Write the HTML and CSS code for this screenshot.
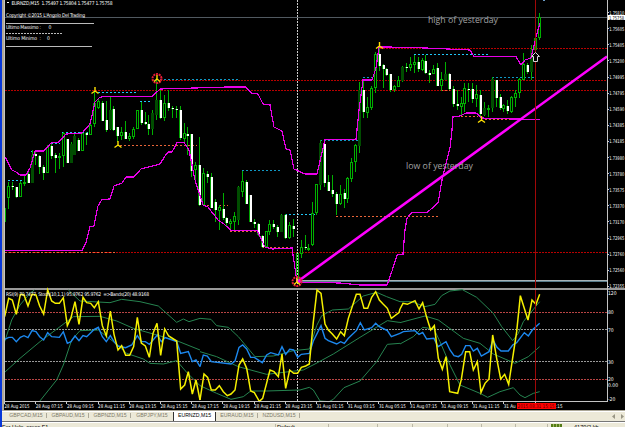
FILE: index.html
```html
<!DOCTYPE html>
<html lang="en">
<head>
<meta charset="utf-8">
<title>EURNZD,M15</title>
<link rel="stylesheet" href="styles.css">
</head>
<body>
<div class="window">
<main class="chart">
<svg class="plot" width="621" height="411" viewBox="4 0 621 411">
  <path class="level" d="M5 90.5H607M5 252.5H607M160 80.5H607M380 48.5H607"/>
  <path class="price" d="M4 17.5H607"/>
  <path class="high-dots" d="M8 180.5H25M31 151.5H40M51 143.5H60M62 132.5H90M98 92.5H137M140 101.5H152M414 54.5H488M285 214.5H317"/>
  <path class="high-dots dim" d="M160 79.5H240M242 170.5H282M320 140.5H358M363 77.5H373M380 47.5H425M492 77.5H536"/>
  <path class="low-dots" d="M120 145.5H197M203 205.5H228M230 231.5H257M262 247.5H290M336 216.5H438M441 90.5H450M461 116.5H478M485 119.5H530M5 252.5H115"/>
  <g id="candles"></g>
  <path class="day-end" d="M297.5 0V401"/>
  <path class="steel" d="M297 280.5H607"/>
  <path class="steel shade" d="M297 281.5H607"/>
  <polyline class="channel" points="4,155 12,170 16,172 20,175 26,175 30,168 35,151 44,151 51,143 59,142 66,134 82,133 90,124 95,102 99,98 103,96.500 152,96.500 160,89 195,88 228,87 246,87 251,93 258,94 263,104 270,105 274,127 282,131 286,149 290,150 294,169 305,174 317,174 325,139.500 356,139.500 359,110 363,80 372,80 376,68 379,47 388,47 426,48 470,50 474,56.500 516,56.500 521,65 525,60 531,58 533,50 536,37 540,23"/>
  <polyline class="channel" points="4,250.500 82,250.500 86,243 90,227 94,226 98,206 102,199.500 110,199 114,186 122,183 126,177 134,177 141,169 160,164 165,156 168,152 172,152 177,142.500 184,142.500 189,150 195,180 203,205 208,207 218,220 224,224 231,230.500 257,230.500 265,247 272,249 292,248 297,282 340,283 360,285 387,285 392,271 397,255 403,254 405,230 407,218 412,212.500 427,212.500 438,203 442,180 450,148 452,130 453,117 460,116 466,113 476,113 482,118 490,118.500 540,119.500"/>
  <path class="trend" d="M297 282L607 56.500"/>
  <path class="cursor" d="M535.500 0V401"/>
  <g class="rings"><circle cx="157" cy="78.500" r="4.500"/><circle cx="297" cy="281.500" r="4.500"/></g>
  <g class="stars">
    <path d="M95 87v4l-3.500 2.500M95 91l3.500 2.500"/><path d="M118 141v4l-3.500 2.500M118 145l3.500 2.500"/><path d="M157 75v4l-3 2.500M157 79l3 2.500"/>
    <path d="M379.500 42v4l-3.500 2.500M379.500 46l3.500 2.500"/><path d="M481.500 116v4l-3.500 2.500M481.500 120l3.500 2.500"/><path d="M297 278v4l-3 2.500M297 282l3 2.500"/>
  </g>
  <path class="arrow" d="M535.500 52.500l4 4h-2v5h-4v-5h-2z"/>
  <text class="note" x="428" y="23" textLength="70" lengthAdjust="spacingAndGlyphs">high of yesterday</text>
  <text class="note" x="406" y="169" textLength="67" lengthAdjust="spacingAndGlyphs">low of yesterday</text>

  <path class="split" d="M4 289H625"/>
  <path class="osc-level" d="M5 312.500H607M5 379.500H607"/>
  <path class="osc-level neutral" d="M5 329.500H607M5 361.500H607"/>
  <g class="osc">
    <g transform="translate(0 285) scale(.33333)">
      <polyline class="band" points="14,170 35,105 60,60 90,25 103,15"/>
      <polyline class="band" points="205,15 240,48 330,53 365,43 420,50 475,63 530,112 550,102 567,110 600,100"/>
      <polyline class="band" points="14,262 60,220 120,170 180,125 220,95 300,94 350,108 400,130 530,167 600,195"/>
      <polyline class="band" points="118,350 170,285 190,240 215,165 240,137 295,135 340,170 380,205 430,222 450,235 490,237 530,227 560,262 600,302"/>
      <polyline class="rsi" points="14,163 26,157 37,157 49,170 61,157 72,152 84,158 96,137 108,140 119,155 131,165 143,143 155,155 178,157 190,140 202,175 213,170 225,153 237,167 249,152 260,155 283,133 295,127 307,155 319,170 331,152 342,170 354,183 377,188 395,180 412,152 424,170 436,170 448,178 472,150 484,170 495,158 530,170 542,205 565,200 577,230 588,225 600,245"/>
      <polyline class="stoch" points="14,95 26,40 37,45 49,88 61,28 72,30 84,63 96,28 108,30 119,63 131,87 143,15 155,48 166,55 178,55 190,38 202,122 213,98 225,50 237,118 249,37 260,53 272,55 283,68 295,50 307,122 319,153 331,78 342,148 354,195 365,182 377,211 389,211 401,185 412,97 424,174 436,183 448,217 459,145 471,115 482,211 494,132 506,153 530,168 542,312 554,300 565,260 577,327 588,285 600,345"/>
    </g>
    <g transform="translate(200 285) scale(.33333)">
      <polyline class="band" points="0,100 33,103 50,122 85,127 115,155 165,215 220,213 280,197 328,192 350,122 365,92 397,75 445,72 490,33 530,22 560,35 600,50"/>
      <polyline class="band" points="0,200 50,215 115,245 200,268 310,255 345,237 400,207 480,157 562,107 597,112 600,112"/>
      <polyline class="band" points="0,302 50,325 93,343 130,335 152,318 200,318 300,315 328,307 340,315 360,348 387,350 400,343 432,308 480,288 530,230 562,178 600,175"/>
      <polyline class="rsi" points="0,245 10,210 22,213 34,230 93,237 105,228 117,187 128,180 140,192 152,217 163,217 187,233 200,210 212,203 235,210 246,185 257,208 269,193 281,195 293,217 304,208 328,205 340,168 363,122 375,160 385,167 410,177 422,170 433,175 445,160 469,137 481,113 493,135 515,128 527,115 538,125 562,137 574,155 600,145"/>
      <polyline class="stoch" points="0,345 12,267 23,277 34,315 46,315 58,302 70,320 82,332 93,327 105,315 117,240 128,222 140,250 152,318 163,323 178,349 188,340 210,255 222,260 235,275 246,207 257,310 269,255 281,265 293,265 304,247 317,243 328,237 340,110 351,15 363,25 375,117 385,135 397,147 410,162 422,140 433,152 445,100 469,28 480,28 492,70 503,70 515,37 527,20 538,45 550,58 562,70 574,100 597,83 600,72"/>
    </g>
    <g transform="translate(400 285) scale(.33333)">
      <polyline class="band" points="0,50 35,50 75,65 105,58 125,32 150,18 187,14 230,37 280,85 305,125 338,167 355,145 370,110 419,50"/>
      <polyline class="band" points="0,113 30,105 75,93 115,105 190,160 240,175 280,207 345,235 385,215 419,185"/>
      <polyline class="band" points="0,177 40,155 68,127 102,132 120,170 150,240 180,300 240,325 263,337 300,320 340,308 360,330 375,338 400,325 419,320"/>
      <polyline class="rsi" points="0,145 10,140 45,137 57,148 68,142 80,162 102,160 114,185 138,170 150,195 162,212 175,215 185,208 197,182 210,182 220,198 232,190 244,213 267,200 279,165 291,187 303,198 325,198 338,180 350,173 373,143 385,153 397,135 419,115"/>
      <polyline class="stoch" points="0,72 9,55 22,58 45,47 57,72 68,53 80,97 92,135 103,122 115,220 127,253 138,215 149,320 173,325 184,283 197,200 209,200 220,255 232,230 243,322 255,295 267,282 278,150 290,220 302,282 314,268 326,298 350,140 361,32 384,105 396,45 408,58 419,28"/>
    </g>
  </g>
  <path class="cursor" d="M535.500 291V401"/>
  <path class="frame" d="M4.500 0V401.500H607.500V0"/>

  <g class="small">
    <path class="caret" d="M6 1.500h4l-2 2.500z"/>
    <text x="11.500" y="4.500" textLength="101">EURNZD,M15&#160; 1.75497 1.75804 1.75477 1.75758</text>
    <text x="6" y="17" textLength="79">Copyright ©2015 L'Angolo Del Trading</text>
    <path class="rule" d="M6 23.500H94M6 46.500H92"/><path class="rule dashed" d="M6 33.500H63"/>
    <text x="6" y="28.500" textLength="35">Ultimo Massimo :</text><text x="48.500" y="28.500">0</text>
    <text x="6" y="40" textLength="35">Ultimo Minimo &#160;:</text><text x="47" y="40">0</text>
    <text x="6" y="296" textLength="143">RSI(9) 70.7477&#160; Stoch(10,1,1) 95.9762 95.9762&#160; =&gt;Bands(20) 48.9168</text>
  </g>
  <g class="small" id="axes"></g>
  <rect class="tag" x="608" y="15" width="17" height="5"/>
  <text class="small tag-text" x="609" y="19.500" textLength="15" lengthAdjust="spacingAndGlyphs">1.75758</text>
  <rect class="time-tag" x="516.500" y="403" width="39" height="6"/>
  <text class="small time-text" x="517.500" y="408.200" textLength="37" lengthAdjust="spacingAndGlyphs">2015.08.31 15:15</text>
  <rect class="speck" x="543" y="0" width="2" height="1"/>
</svg>
</main>
<nav class="tabs">
  <span class="tab">GBPCAD,M15</span><span class="tab">GBPAUD,M15</span><span class="tab">GBPNZD,M15</span><span class="tab last">GBPJPY,M15</span><span class="tab active">EURNZD,M15</span><span class="tab">EURAUD,M15</span><span class="tab">NZDUSD,M15</span>
  <svg class="scroll" width="12" height="5" viewBox="0 0 12 5"><path d="M3 0v5L0 2.500zM9 0v5l3-2.500z"/></svg>
</nav>
<footer class="status">
  <span class="cell help">For Help, press F1</span><span class="cell profile">Default</span><span class="cell c49"></span><span class="cell c35"></span><span class="cell c35"></span><span class="cell c34"></span><span class="cell c34"></span><span class="cell c32"></span>
  <span class="signal"></span><span class="traffic">4170/2 kb</span>
</footer>
</div>
<script src="chart.js"></script>
</body>
</html>
```
FILE: styles.css
```css
* { box-sizing: border-box; }
body { margin: 0; background: #000; font-family: "Liberation Sans", Arial, sans-serif; overflow: hidden; }
.window { width: 625px; height: 427px; display: flex; flex-direction: column; border-left: 2px solid #0838d8; background: #ece9d8; overflow: hidden; }
.chart { height: 411px; flex: none; padding-left: 2px; background: #b0a898; border-bottom: 1px solid #aca899; overflow: hidden; }
.plot { display: block; background: #000; shape-rendering: crispEdges; }
.plot path, .plot polyline { fill: none; }
.level { stroke: #b80000; stroke-dasharray: 2 1; }
.price { stroke: #515960; }
.high-dots { stroke: #20c8f8; stroke-dasharray: 2 2; }
.high-dots.dim { stroke: #1098c4; stroke-dasharray: 2 2; }
.low-dots { stroke: #e86438; stroke-dasharray: 2 2; }
.day-end { stroke: #ccc; stroke-dasharray: 2 1; }
.steel { stroke: #a8b4b8; }
.steel.shade { stroke: #587c8c; }
.channel { stroke: #e800e8; stroke-width: 1.2; }
.trend { stroke: #ff00ff; stroke-width: 2.6; shape-rendering: auto; }
.cursor { stroke: #a00808; }
.rings { fill: none; stroke: #e81c38; stroke-width: 2; stroke-dasharray: 2 .8; shape-rendering: auto; }
.stars { stroke: #ffe000; stroke-width: 1.4; shape-rendering: auto; }
.plot .arrow { fill: #000; stroke: #d8d8d8; shape-rendering: auto; }
.note { font: 9px "Open Sans", "Noto Sans", sans-serif; fill: #a2a2a2; }
.split { stroke: #999; stroke-width: 2; }
.osc-level { stroke: #b84444; stroke-dasharray: 2 1; }
.osc-level.neutral { stroke: #999; }
.osc polyline { vector-effect: non-scaling-stroke; shape-rendering: auto; }
.band { stroke: #268450; stroke-width: 1; }
.rsi { stroke: #1c88ee; stroke-width: 1.4; }
.stoch { stroke: #f5f000; stroke-width: 1.5; }
.frame { stroke: #c4c4c4; }
.small { font-family: "DejaVu Sans Condensed", "Liberation Sans", sans-serif; font-size: 5px; fill: #fff; }
.plot .caret { fill: #fff; }
.rule { stroke: #bbb; }
.rule.dashed { stroke-dasharray: 2 1; }
.tick { stroke: #ccc; }
.wick { stroke: #00b000; }
.bull { fill: #000; stroke: #00b000; }
.edge { fill: #00a000; }
.bear { fill: #fff; }
.solid { fill: #004c00; }
.tag { fill: #fff; }
.tag-text { fill: #000; }
.time-tag { fill: #ff0000; }
.time-text { fill: #500; }
.speck { fill: #6c9cc8; }
.tabs { height: 11px; flex: none; display: flex; align-items: center; padding-left: 3px; border-top: 1px solid #fff; border-bottom: 1px solid #777; font-size: 5.2px; color: #7c796a; }
.tab { width: 42px; height: 9px; line-height: 7px; text-align: center; position: relative; white-space: nowrap; }
.tab::after { content: ""; position: absolute; right: 0; top: 1px; width: 1px; height: 5px; background: #aca899; }
.tab.last::after, .tab.active::after { display: none; }
.tab.active { width: 43px; background: #fff; color: #000; border: solid #333; border-width: 0 1px; }
.scroll { margin-left: auto; margin-right: 1px; fill: #999685; }
.status { height: 5px; flex: none; display: flex; padding-top: 1px; font-size: 5.6px; line-height: 6px; color: #000; border-top: 1px solid #fff; }
.cell { border-right: 1px solid #bbb8a8; height: 8px; white-space: nowrap; flex: none; }
.help { width: 274px; }
.profile { width: 53px; padding-left: 1px; }
.c49 { width: 49px; }
.c35 { width: 35px; }
.c34 { width: 34px; }
.c32 { width: 32px; }
.signal { width: 11px; height: 6px; margin: 0 12px 0 3px; background: repeating-linear-gradient(90deg, #547c18 0 2px, #a0b860 2px 3px); flex: none; }
.traffic { white-space: nowrap; }
```
FILE: chart.js
```js
// Bars as [high, low, body top, body bottom, kind]: w = bear, h = bull, d = solid
const bars = `196 228 208 222 h|182 209 186 198 h|182 190 186 187 w|187 198 187 197 w|181 197 183 197 h|174 186 182 184 h|171 183 174 183 w|150 183 155 183 d|150 165 154 156 w|155 174 156 167 w|165 180 167 173 w|145 173 147 173 h|143 159 146 156 w|153 173 155 158 w|153 169 156 157 h|132 167 133 156 h|139 163 139 163 w|142 163 144 163 d|134 155 136 155 d|138 151 140 151 w|132 151 133 151 h|132 145 133 135 w|123 135 125 135 h|91 127 103 124 h|99 109 101 108 h|101 121 103 121 w|101 132 120 130 w|97 130 110 129 d|106 131 109 130 w|127 142 127 136 w|127 140 132 136 h|121 139 132 139 w|133 141 136 139 h|127 139 129 137 h|110 129 110 129 h|102 125 110 123 w|112 125 122 124 w|115 135 124 129 w|110 135 113 129 d|78 120 100 115 d|89 119 100 118 w|95 121 103 118 h|90 111 103 108 w|106 118 108 109 w|106 118 109 110 w|106 140 110 138 w|123 143 133 139 h|127 155 134 136 w|134 177 134 171 w|162 180 165 170 h|137 206 165 205 w|168 206 173 205 h|171 183 174 177 w|173 208 177 208 w|199 222 202 210 w|205 230 207 211 h|193 220 209 218 w|217 227 218 223 w|219 231 221 224 h|212 230 216 222 h|186 225 187 220 d|171 197 181 192 h|180 204 182 204 w|195 222 195 222 w|219 228 222 224 w|223 236 224 235 w|235 248 236 247 w|231 247 231 247 h|220 235 224 232 h|220 229 224 227 w|225 237 227 232 w|214 232 215 232 d|214 239 215 238 w|222 239 225 238 h|219 237 226 229 w|252 281 253 281 h|240 258 247 254 h|235 250 247 248 w|244 251 248 250 h|202 246 213 245 h|184 215 184 213 h|140 190 143 185 d|142 187 144 183 w|175 191 182 191 w|175 197 190 194 w|192 215 194 204 w|185 205 194 204 h|189 208 193 199 w|177 203 178 199 h|158 182 162 179 h|144 172 145 162 h|82 153 90 146 d|79 118 90 112 w|97 118 107 113 h|86 110 88 108 h|52 93 54 88 h|47 71 54 66 w|64 88 65 69 w|68 76 69 75 w|74 92 74 90 w|85 92 86 90 h|76 87 80 87 h|66 82 67 81 d|63 72 67 68 w|57 71 64 68 h|55 73 62 65 h|57 72 62 69 w|58 71 60 70 h|55 74 61 73 w|70 83 73 75 w|65 74 69 74 h|63 86 68 86 w|72 91 79 86 h|62 80 74 80 d|73 90 74 89 w|86 107 89 104 w|90 110 104 106 w|97 116 103 107 h|83 112 88 104 h|83 102 89 90 w|83 103 89 99 w|85 107 94 99 h|90 116 95 114 w|102 116 108 115 d|105 117 108 109 h|77 112 79 108 d|80 107 80 98 w|94 110 97 108 w|104 112 105 109 h|100 114 106 111 w|96 113 97 112 h|90 107 93 98 h|78 98 79 93 h|53 80 64 80 h|63 74 65 72 w|45 80 50 72 d|37 53 38 50 h|13 40 17 38 h`;
const NS = "http://www.w3.org/2000/svg";
const add = (parent, tag, attrs, text) => {
  const el = document.createElementNS(NS, tag);
  for (const key in attrs) el.setAttribute(key, attrs[key]);
  if (text) el.textContent = text;
  parent.append(el);
};
const candles = document.getElementById("candles");
bars.split("|").forEach((bar, i) => {
  const [high, low, top, bottom, kind] = bar.split(" ");
  const x = Math.floor(4.7 + 3.9 * i);
  add(candles, "path", { class: "wick", d: `M${x + .5} ${high}V${low}` });
  if (kind === "h") {
    add(candles, "rect", { class: "bull", x: x - .5, y: +top + .5, width: 2, height: Math.max(1, bottom - top - 1) });
  } else if (kind === "w") {
    add(candles, "rect", { class: "edge", x: x - 1, y: top, width: 3, height: bottom - top });
    add(candles, "rect", { class: "bear", x, y: top, width: 2, height: bottom - top });
  } else {
    add(candles, "rect", { class: "solid", x: x - 1, y: top, width: 3, height: bottom - top });
  }
});
const axes = document.getElementById("axes");
const prices = ["1.75810","1.75605","1.75405","1.75200","1.74995","1.74795","1.74590","1.74385","1.74185","1.73980","1.73780","1.73575","1.73370","1.73170","1.72965","1.72760","1.72560","1.72355"];
prices.forEach((price, i) => {
  const y = 12.6 + i * 16.1;
  add(axes, "path", { class: "tick", d: `M607 ${Math.floor(y) + .5}h2` });
  add(axes, "text", { x: 609.3, y: y + 2, textLength: 15, lengthAdjust: "spacingAndGlyphs" }, price);
});
[["120",295],["80",314],["70",332],["30",363.5],["20",381],["0.00",387.300],["-20",400.500]].forEach(([label, y]) => add(axes, "text", { x: 608, y }, label));
["28 Aug 2015","28 Aug 07:15","28 Aug 09:15","28 Aug 11:15","28 Aug 13:15","28 Aug 15:15","28 Aug 17:15","28 Aug 19:15","28 Aug 21:15","28 Aug 23:15","31 Aug 01:15","31 Aug 03:15","31 Aug 05:15","31 Aug 07:15","31 Aug 09:15","31 Aug 11:15"].forEach((label, i) => {
  const x = 4.5 + i * 31.2;
  add(axes, "path", { class: "tick", d: `M${Math.floor(x) + .5} 402v2` });
  add(axes, "text", { x, y: 408.2, textLength: i ? 27 : 25, lengthAdjust: "spacingAndGlyphs" }, label);
});
// The last two time labels are clipped by the cursor tag
add(axes, "path", { class: "tick", d: "M503.5 402v2M535.5 402v2" });
add(axes, "text", { x: 503.7, y: 408.2, textLength: 12, lengthAdjust: "spacingAndGlyphs" }, "31 Au");
add(axes, "text", { x: 556, y: 408.2, textLength: 6.5, lengthAdjust: "spacingAndGlyphs" }, ":15");
```
